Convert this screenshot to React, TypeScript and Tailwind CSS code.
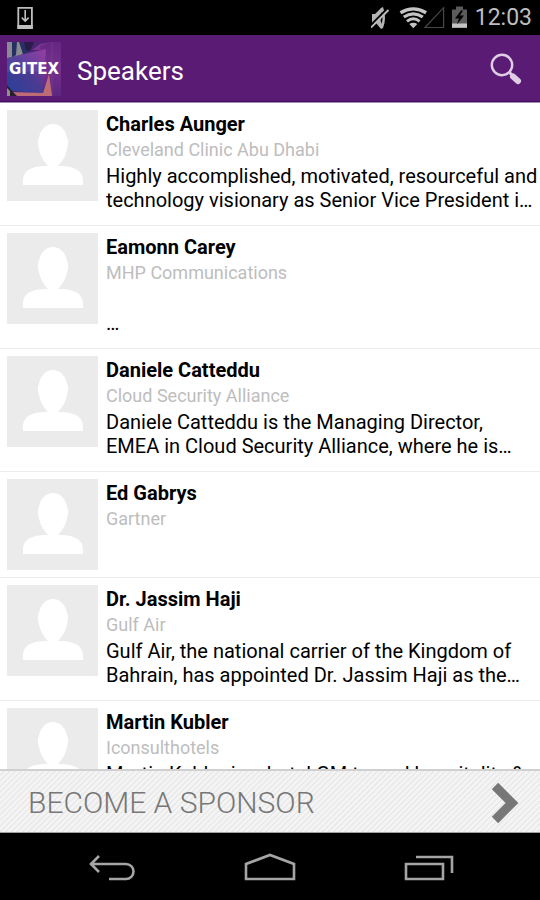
const speakers = [
  {
    id: 1,
    name: "Charles Aunger",
    company: "Cleveland Clinic Abu Dhabi",
    bio: "Highly accomplished, motivated, resourceful and technology visionary as Senior Vice President i…",
  },
  {
    id: 2,
    name: "Eamonn Carey",
    company: "MHP Communications",
    bio: "\n…",
  },
  {
    id: 3,
    name: "Daniele Catteddu",
    company: "Cloud Security Alliance",
    bio: "Daniele Catteddu is the Managing Director, EMEA in Cloud Security Alliance, where he is…",
  },
  {
    id: 4,
    name: "Ed Gabrys",
    company: "Gartner",
    bio: "",
  },
  {
    id: 5,
    name: "Dr. Jassim Haji",
    company: "Gulf Air",
    bio: "Gulf Air, the national carrier of the Kingdom of Bahrain, has appointed Dr. Jassim Haji as the…",
  },
  {
    id: 6,
    name: "Martin Kubler",
    company: "Iconsulthotels",
    bio: "Martin Kubler is a hotel GM turned hospitality &",
  },
];

function StatusBar() {
  return (
    <div className="h-[35px] shrink-0 bg-black flex items-center justify-between pl-4 pr-2">
      <svg width="18" height="26" viewBox="0 0 18 26" fill="none">
        <path d="M2.3 2.8h13.6v20H2.3z" stroke="#bebebe" strokeWidth="1.8" />
        <path d="M1.4 20h15.4v4H1.4z" fill="#bebebe" />
        <path d="M9.2 5v11M5.8 12.6l3.4 3.6 3.4-3.6" stroke="#bebebe" strokeWidth="1.6" />
      </svg>

      <div className="flex items-center">
        {/* Ringer off, wifi, no signal, charging */}
        <svg width="98" height="26" viewBox="0 0 98 26">
          <path d="M1 9h3l6-6 2-1q4 11 0 21l-2 1-5-6H1z" fill="#b4b4b4" />
          <path d="M10.5 7q2 6 0 12-2-6 0-12z" fill="#000" />
          <path d="M-1 21L16 4" stroke="#000" strokeWidth="2" />
          <path d="M0 22.5L17.5 5" stroke="#bebebe" strokeWidth="1.8" />
          <g fill="none" stroke="#c4c4c4" strokeWidth="3.4">
            <path d="M29.5 7.7q12.8-7.6 25.6 0" />
            <path d="M32.8 12q9.5-6.4 19 0" strokeWidth="3.2" />
            <path d="M36 16.3q6.3-5 12.6 0" strokeWidth="3" />
          </g>
          <path d="M38.3 19.1q4-2.6 8 0l-4 4.1z" fill="#c4c4c4" />
          <path d="M54 22.5h18.6V2.7z" fill="none" stroke="#484848" strokeWidth="1.2" />
          <path d="M85 1.5h7v3h4v18H81v-18h4z" fill="#5b5b5b" />
          <path d="M81 18.5h15v4.3H81z" fill="#c4c4c4" />
          <path d="M90 5.5l-6 8h4l-2 6 7-9h-4l3-5z" fill="#000" />
        </svg>
        <span className="ml-1.5 text-[23px] leading-none text-[#bebebe]">12:03</span>
      </div>
    </div>
  );
}

function GitexLogo() {
  return (
    <svg width="54" height="54" viewBox="0 0 54 54" role="img" aria-label="GITEX">
      <defs>
        <linearGradient id="cube" x1="0" y1="1" x2="1" y2="0">
          <stop offset="0" stopColor="#26429a" />
          <stop offset="0.5" stopColor="#4a3a91" />
          <stop offset="1" stopColor="#a5319b" />
        </linearGradient>
        <linearGradient id="side" x1="0" y1="0" x2="0" y2="1">
          <stop offset="0" stopColor="#632782" />
          <stop offset="0.5" stopColor="#76318d" />
          <stop offset="1" stopColor="#5b2780" />
        </linearGradient>
      </defs>
      <path d="M0 0h54v54H0z" fill="#492573" />
      <path d="M0 0h14L16 12 0 18z" fill="#8c8b91" />
      <path d="M5 0h5L9 13l-4 3zM12 0h3l7 10-6 2z" fill="#253064" />
      <path d="M17 0h10l-4 9-4-1z" fill="#2b1b48" />
      <path d="M25 8l8-6 13-2-6 8z" fill="#7e3494" />
      <path d="M33 4l12-4h9v54H38z" fill="url(#side)" />
      <path d="M0 16L39 7 36 52 0 48z" fill="url(#cube)" />
      <path d="M0 16L30 9l9-1-3 22H0z" fill="#7658b5" opacity="0.3" />
      <path d="M45 0v54" stroke="#8c4298" opacity="0.5" />
      <path d="M4 50l32 1 6-19 3 22H4z" fill="#bd6c76" />
      <path d="M0 43l6 7 4 4H0z" fill="#24222e" />
      <path d="M0 46l3 3v5H0z" fill="#9a8989" />
      <text
        x="27"
        y="32"
        textAnchor="middle"
        fontFamily="DejaVu Sans, sans-serif"
        fontWeight="700"
        fontSize="15"
        fill="#fff"
      >
        GITEX
      </text>
    </svg>
  );
}

function Avatar() {
  return (
    <svg className="shrink-0" width="91" height="91" viewBox="0 0 91 91">
      <path d="M0 0h91v91H0z" fill="#ebebeb" />
      <path
        d="M46 14c-8 0-13 7-14 14-2 2-1 8 0 11 1 7 6 14 9 17-12 0-25 2-25 15v4h60v-4c0-13-13-15-25-15 3-3 8-10 9-17 1-3 2-9 0-11-1-7-6-14-14-14z"
        fill="#fff"
      />
    </svg>
  );
}

export default function App() {
  return (
    <div className="h-screen flex flex-col overflow-hidden bg-white font-[Roboto,sans-serif]">
      <StatusBar />

      {/* Header */}
      <header className="h-[68px] shrink-0 flex items-center justify-between pl-[7px] pr-4 bg-[#591b74] border-b border-[#a58db3] shadow-[inset_0_-1px_0_#3d0f5d]">
        <div className="flex items-center gap-4">
          <GitexLogo />
          <h1 className="pt-1 text-[26px] leading-8 text-white">Speakers</h1>
        </div>
        <button type="button" aria-label="Search">
          <svg width="34" height="34" viewBox="0 0 34 34" fill="none" stroke="#dfcde6">
            <circle cx="12" cy="13" r="10.2" strokeWidth="2.4" />
            <path d="M19 20l3 3" strokeWidth="3" />
            <path d="M23 24.5l5 4.5" strokeWidth="6" strokeLinecap="round" />
          </svg>
        </button>
      </header>

      {/* Speakers */}
      <ul className="flex-1 min-h-0 overflow-hidden">
        {speakers.map((speaker) => (
          <li key={speaker.id} className="flex gap-2 pl-[7px] py-[7px] border-b border-[#ececec]">
            <Avatar />
            <div className="min-w-0 flex-1 text-xl">
              <h2 className="font-bold leading-7 text-black">{speaker.name}</h2>
              <p className="text-lg leading-6 text-[#bdbdbd]">{speaker.company}</p>
              {speaker.bio && (
                <p className="pt-0.5 pb-1.5 leading-6 text-black whitespace-pre-line">{speaker.bio}</p>
              )}
            </div>
          </li>
        ))}
      </ul>

      {/* Sponsor banner */}
      <a
        href="#sponsor"
        className="h-16 shrink-0 flex items-center justify-between pt-0.5 pl-7 pr-5 border-t-2 border-b border-t-[#d0d0d0] border-b-[#a0a0a0] bg-[repeating-linear-gradient(135deg,#f4f4f4_0px,#f4f4f4_2px,#e4e4e4_3px,#f4f4f4_4px)]"
      >
        <span className="font-light text-3xl text-[#777777]">BECOME A SPONSOR</span>
        <svg width="30" height="42" viewBox="0 0 30 42" fill="none">
          <path d="M5 4l17 17L5 38" stroke="#777" strokeWidth="9" />
        </svg>
      </a>

      {/* System navigation */}
      <nav className="h-[67px] shrink-0 px-8 pt-0.5 flex items-center bg-black">
        <button type="button" aria-label="Back" className="flex-1 flex justify-center">
          <svg width="48" height="30" viewBox="0 0 48 30" fill="none" stroke="#a5a5a5" strokeWidth="2.6">
            <path d="M3 11h36a7 7 0 0 1 0 15H22M12 3l-8 8 8 8" />
          </svg>
        </button>
        <button type="button" aria-label="Home" className="flex-1 flex justify-center">
          <svg width="52" height="30" viewBox="0 0 52 30" fill="none" stroke="#a5a5a5" strokeWidth="2.6">
            <path d="M2 26V11L26 2l24 9v15z" />
          </svg>
        </button>
        <button type="button" aria-label="Recent apps" className="flex-1 flex justify-center">
          <svg width="50" height="30" viewBox="0 0 50 30" fill="none" stroke="#a5a5a5" strokeWidth="2.6">
            <path d="M2 11h37v15H2zM12 4h36v16" />
          </svg>
        </button>
      </nav>
    </div>
  );
}
